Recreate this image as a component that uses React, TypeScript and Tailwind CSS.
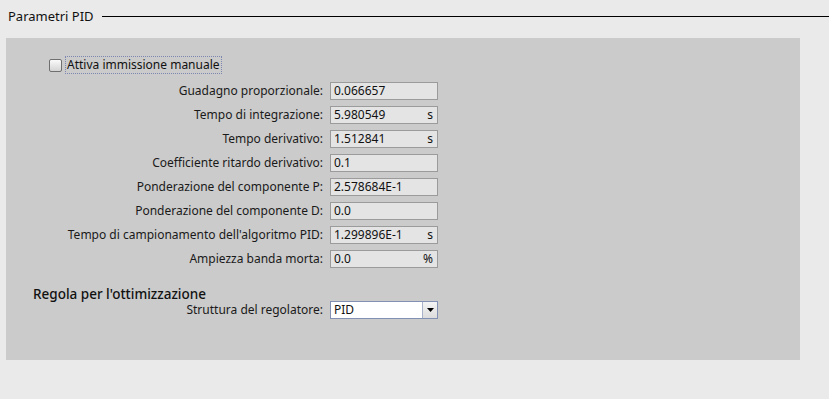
import React from "react";

const font = { fontFamily: "'Noto Sans', 'DejaVu Sans', sans-serif" };

type Row = { label: string; value: string; unit?: string };

const rows: Row[] = [
  { label: "Guadagno proporzionale:", value: "0.066657" },
  { label: "Tempo di integrazione:", value: "5.980549", unit: "s" },
  { label: "Tempo derivativo:", value: "1.512841", unit: "s" },
  { label: "Coefficiente ritardo derivativo:", value: "0.1" },
  { label: "Ponderazione del componente P:", value: "2.578684E-1" },
  { label: "Ponderazione del componente D:", value: "0.0" },
  { label: "Tempo di campionamento dell'algoritmo PID:", value: "1.299896E-1", unit: "s" },
  { label: "Ampiezza banda morta:", value: "0.0", unit: "%" },
];

function Field({ label, value, unit }: Row) {
  return (
    <div className="flex h-[18px] items-center">
      <div className="w-[324px] pr-[7px] text-right text-[12px] leading-none text-[#1a1a1a]">{label}</div>
      <div className="flex h-[18px] w-[108px] items-center justify-between border border-[#9b9b9b] bg-[#e4e4e4] pl-[3px] pr-[4px] text-[12px] leading-none text-[#111]">
        <span>{value}</span>
        {unit && <span>{unit}</span>}
      </div>
    </div>
  );
}

export default function App() {
  return (
    <div className="h-[399px] w-[829px] overflow-hidden bg-[#eaeaea]" style={font}>
      <div className="flex h-[32px] items-center pl-[8px]">
        <span className="text-[13px] leading-none text-[#111]">Parametri PID</span>
        <div className="ml-[8px] h-px flex-1 bg-black" />
      </div>
      <div className="ml-[6px] mt-[6px] h-[322px] w-[794px] bg-[#cbcbcb]">
        <div className="flex items-center pl-[43px] pt-[18px]">
          <div className="h-[13px] w-[13px] rounded-[2px] border border-[#6f6f6f] bg-gradient-to-b from-[#fafafa] to-[#d4d4d4]" />
          <div className="ml-[3px] border border-dotted border-[#7d86b0] px-[1px] py-[2px] text-[12px] leading-none text-[#111]">
            Attiva immissione manuale
          </div>
        </div>
        <div className="mt-[8px] flex flex-col gap-[6px]">
          {rows.map((r) => (
            <Field key={r.label} {...r} />
          ))}
        </div>
        <div className="mt-[20px] pl-[27px] text-[13.5px] font-medium leading-none text-[#111]">
          Regola per l'ottimizzazione
        </div>
        <div className="-mt-[1px] flex h-[18px] items-center">
          <div className="w-[324px] pr-[7px] text-right text-[12px] leading-none text-[#1a1a1a]">Struttura del regolatore:</div>
          <div className="flex h-[18px] w-[108px] items-stretch border border-[#8290b4] bg-white">
            <div className="flex flex-1 items-center pl-[3px] text-[12px] leading-none text-[#111]">PID</div>
            <div className="flex w-[15px] items-center justify-center border-l border-[#a9b2c8] bg-gradient-to-b from-[#f4f4f4] to-[#dcdcdc]">
              <svg width="7" height="4" viewBox="0 0 7 4">
                <path d="M0 0 H7 L3.5 4 Z" fill="#000" />
              </svg>
            </div>
          </div>
        </div>
      </div>
    </div>
  );
}
